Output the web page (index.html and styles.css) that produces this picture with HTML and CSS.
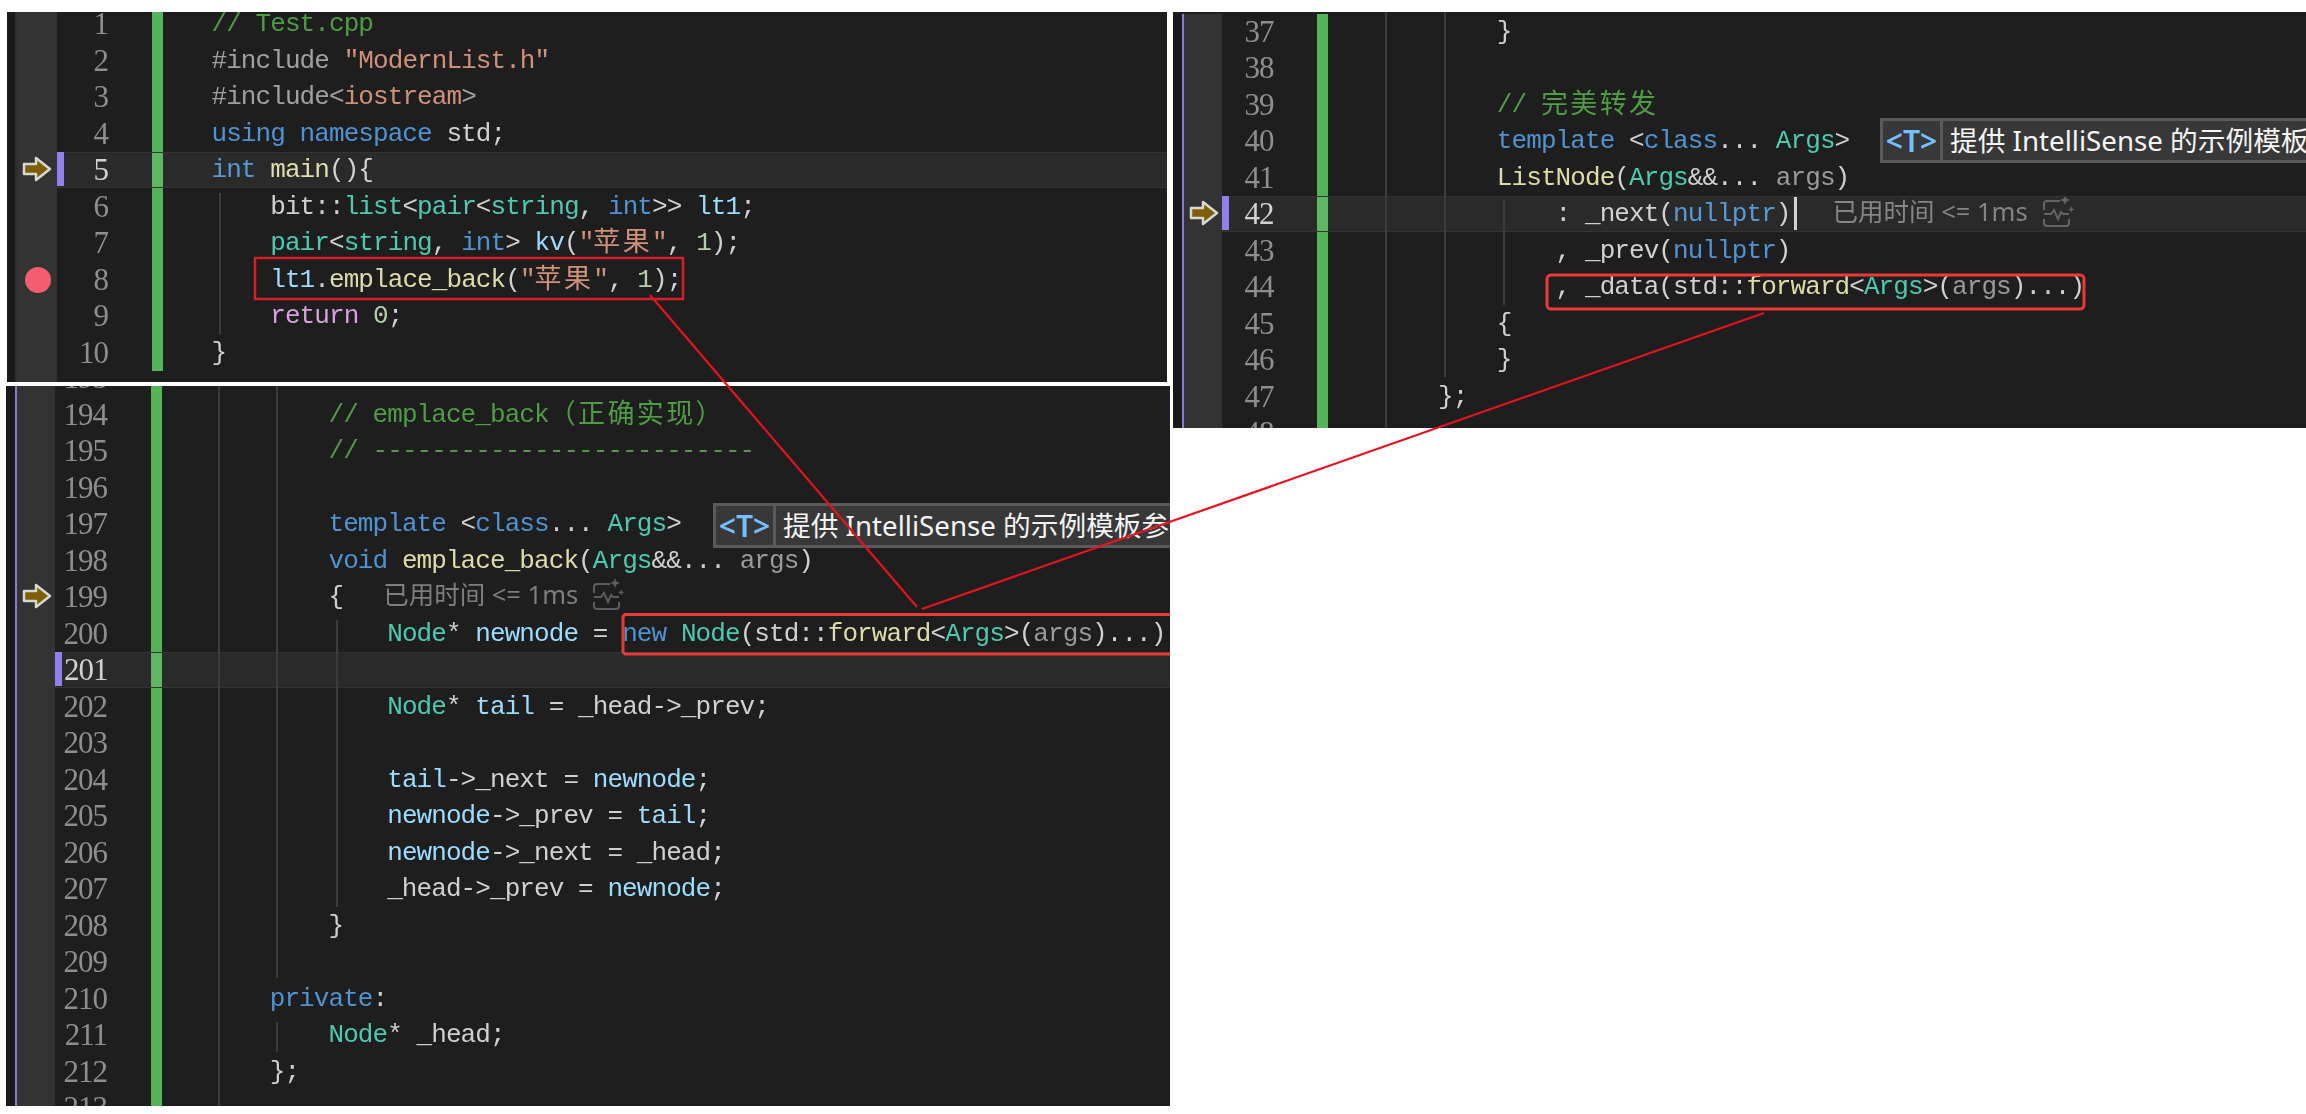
FILE: index.html
```html
<!DOCTYPE html>
<html lang="zh-CN">
<head>
<meta charset="utf-8">
<title>emplace_back</title>
<link rel="stylesheet" href="styles.css">
</head>
<body>
<div class="page">
  <div class="left-col">
    <section class="panel panel-a">
      <div class="row"><i class="g"></i><b class="num">1</b><i class="chg"></i><code class="code"><span class="c">// Test.cpp</span></code></div>
      <div class="row"><i class="g"></i><b class="num">2</b><i class="chg"></i><code class="code"><span class="m">#include</span> <span class="s">"ModernList.h"</span></code></div>
      <div class="row"><i class="g"></i><b class="num">3</b><i class="chg"></i><code class="code"><span class="m">#include&lt;</span><span class="s">iostream</span><span class="m">&gt;</span></code></div>
      <div class="row"><i class="g"></i><b class="num">4</b><i class="chg"></i><code class="code"><span class="k">using namespace</span> std;</code></div>
      <div class="row cur"><i class="g"><svg class="arrow" viewBox="0 0 30 26"><path d="M2 8H14V2L28 13L14 24V18H2Z"/></svg></i><b class="num">5</b><i class="chg"></i><code class="code"><span class="k">int</span> <span class="f">main</span>(){</code></div>
      <div class="row"><i class="g"></i><b class="num">6</b><i class="chg"></i><code class="code">    bit::<span class="t">list</span>&lt;<span class="t">pair</span>&lt;<span class="t">string</span>, <span class="k">int</span>&gt;&gt; <span class="v">lt1</span>;</code></div>
      <div class="row"><i class="g"></i><b class="num">7</b><i class="chg"></i><code class="code">    <span class="t">pair</span>&lt;<span class="t">string</span>, <span class="k">int</span>&gt; <span class="v">kv</span>(<span class="s">"<span class="zh">苹果</span>"</span>, <span class="n">1</span>);</code></div>
      <div class="row"><i class="g"><i class="bp"></i></i><b class="num">8</b><i class="chg"></i><code class="code">    <span class="v">lt1</span>.<span class="f">emplace_back</span>(<span class="s">"<span class="zh">苹果</span>"</span>, <span class="n">1</span>);</code></div>
      <div class="row"><i class="g"></i><b class="num">9</b><i class="chg"></i><code class="code">    <span class="r">return</span> <span class="n">0</span>;</code></div>
      <div class="row"><i class="g"></i><b class="num">10</b><i class="chg"></i><code class="code">}</code></div>
      <div class="row"><i class="g"></i><b class="num"></b><i class="chg off"></i><code class="code"></code></div>
      <i class="guide ga1"></i>
    </section>
    <section class="panel panel-c">
      <div class="row"><i class="g"></i><b class="num">193</b><i class="chg"></i><code class="code">        <span class="c">//</span></code></div>
      <div class="row"><i class="g"></i><b class="num">194</b><i class="chg"></i><code class="code">        <span class="c">// emplace_back<span class="zh">（正确实现）</span></span></code></div>
      <div class="row"><i class="g"></i><b class="num">195</b><i class="chg"></i><code class="code">        <span class="c">// --------------------------</span></code></div>
      <div class="row"><i class="g"></i><b class="num">196</b><i class="chg"></i><code class="code"></code></div>
      <div class="row"><i class="g"></i><b class="num">197</b><i class="chg"></i><code class="code">        <span class="k">template</span> &lt;<span class="k">class</span>... <span class="t">Args</span>&gt;</code></div>
      <div class="row"><i class="g"></i><b class="num">198</b><i class="chg"></i><code class="code">        <span class="k">void</span> <span class="f">emplace_back</span>(<span class="t">Args</span>&amp;&amp;... <span class="p">args</span>)</code></div>
      <div class="row"><i class="g"><svg class="arrow" viewBox="0 0 30 26"><path d="M2 8H14V2L28 13L14 24V18H2Z"/></svg></i><b class="num">199</b><i class="chg"></i><code class="code">        {<span class="lens lens-c">已用时间 &lt;= 1ms<svg class="lens-icon" viewBox="0 0 30 29"><path d="M1 12V6a3 3 0 0 1 3-3H17M1 21v4a3 3 0 0 0 3 3H23a3 3 0 0 0 3-3v-4M1 16H8l3-4 4 9 3-7 2 2H26"/><path class="spark" d="M22-3l1.500 3.500L27 2l-3.500 1.500L22 7l-1.500-3.500L17 2l3.500-1.500ZM28.300 8l.9 2.400 2.400.9-2.400.9-.9 2.400-.9-2.400-2.400-.9 2.400-.9Z"/></svg></span></code></div>
      <div class="row"><i class="g"></i><b class="num">200</b><i class="chg"></i><code class="code">            <span class="t">Node</span>* <span class="v">newnode</span> = <span class="k">new</span> <span class="t">Node</span>(std::<span class="f">forward</span>&lt;<span class="t">Args</span>&gt;(<span class="p">args</span>)...);</code></div>
      <div class="row cur"><i class="g"></i><b class="num">201</b><i class="chg"></i><code class="code"></code></div>
      <div class="row"><i class="g"></i><b class="num">202</b><i class="chg"></i><code class="code">            <span class="t">Node</span>* <span class="v">tail</span> = _head-&gt;_prev;</code></div>
      <div class="row"><i class="g"></i><b class="num">203</b><i class="chg"></i><code class="code"></code></div>
      <div class="row"><i class="g"></i><b class="num">204</b><i class="chg"></i><code class="code">            <span class="v">tail</span>-&gt;_next = <span class="v">newnode</span>;</code></div>
      <div class="row"><i class="g"></i><b class="num">205</b><i class="chg"></i><code class="code">            <span class="v">newnode</span>-&gt;_prev = <span class="v">tail</span>;</code></div>
      <div class="row"><i class="g"></i><b class="num">206</b><i class="chg"></i><code class="code">            <span class="v">newnode</span>-&gt;_next = _head;</code></div>
      <div class="row"><i class="g"></i><b class="num">207</b><i class="chg"></i><code class="code">            _head-&gt;_prev = <span class="v">newnode</span>;</code></div>
      <div class="row"><i class="g"></i><b class="num">208</b><i class="chg"></i><code class="code">        }</code></div>
      <div class="row"><i class="g"></i><b class="num">209</b><i class="chg"></i><code class="code"></code></div>
      <div class="row"><i class="g"></i><b class="num">210</b><i class="chg"></i><code class="code">    <span class="k">private</span>:</code></div>
      <div class="row"><i class="g"></i><b class="num">211</b><i class="chg"></i><code class="code">        <span class="t">Node</span>* _head;</code></div>
      <div class="row"><i class="g"></i><b class="num">212</b><i class="chg"></i><code class="code">    };</code></div>
      <div class="row"><i class="g"></i><b class="num">213</b><i class="chg"></i><code class="code"></code></div>
      <i class="guide gc1"></i><i class="guide gc2"></i><i class="guide gc3"></i><i class="guide gc4"></i>
      <div class="hint"><span class="hint-t">&lt;T&gt;</span><span class="hint-text">提供 IntelliSense 的示例模板参数</span></div>
    </section>
  </div>
  <section class="panel panel-b">
    <div class="row"><i class="g"></i><b class="num">37</b><i class="chg"></i><code class="code">        }</code></div>
    <div class="row"><i class="g"></i><b class="num">38</b><i class="chg"></i><code class="code"></code></div>
    <div class="row"><i class="g"></i><b class="num">39</b><i class="chg"></i><code class="code">        <span class="c">// <span class="zh">完美转发</span></span></code></div>
    <div class="row"><i class="g"></i><b class="num">40</b><i class="chg"></i><code class="code">        <span class="k">template</span> &lt;<span class="k">class</span>... <span class="t">Args</span>&gt;</code></div>
    <div class="row"><i class="g"></i><b class="num">41</b><i class="chg"></i><code class="code">        <span class="f">ListNode</span>(<span class="t">Args</span>&amp;&amp;... <span class="p">args</span>)</code></div>
    <div class="row cur"><i class="g"><svg class="arrow" viewBox="0 0 30 26"><path d="M2 8H14V2L28 13L14 24V18H2Z"/></svg></i><b class="num">42</b><i class="chg"></i><code class="code">            : _next(<span class="k">nullptr</span>)<i class="caret"></i><span class="lens lens-b">已用时间 &lt;= 1ms<svg class="lens-icon" viewBox="0 0 30 29"><path d="M1 12V6a3 3 0 0 1 3-3H17M1 21v4a3 3 0 0 0 3 3H23a3 3 0 0 0 3-3v-4M1 16H8l3-4 4 9 3-7 2 2H26"/><path class="spark" d="M22-3l1.500 3.500L27 2l-3.500 1.500L22 7l-1.500-3.500L17 2l3.500-1.500ZM28.300 8l.9 2.400 2.400.9-2.400.9-.9 2.400-.9-2.400-2.400-.9 2.400-.9Z"/></svg></span></code></div>
    <div class="row"><i class="g"></i><b class="num">43</b><i class="chg"></i><code class="code">            , _prev(<span class="k">nullptr</span>)</code></div>
    <div class="row"><i class="g"></i><b class="num">44</b><i class="chg"></i><code class="code">            , _data(std::<span class="f">forward</span>&lt;<span class="t">Args</span>&gt;(<span class="p">args</span>)...)</code></div>
    <div class="row"><i class="g"></i><b class="num">45</b><i class="chg"></i><code class="code">        {</code></div>
    <div class="row"><i class="g"></i><b class="num">46</b><i class="chg"></i><code class="code">        }</code></div>
    <div class="row"><i class="g"></i><b class="num">47</b><i class="chg"></i><code class="code">    };</code></div>
    <div class="row"><i class="g"></i><b class="num">48</b><i class="chg"></i><code class="code"></code></div>
    <i class="guide gb1"></i><i class="guide gb2"></i><i class="guide gb3"></i>
    <div class="hint"><span class="hint-t">&lt;T&gt;</span><span class="hint-text">提供 IntelliSense 的示例模板参数</span></div>
  </section>
  <svg class="notes" viewBox="0 0 2306 1114">
    <rect class="box-a" x="255" y="258" width="428" height="41"/>
    <path class="box-b" d="M1170 614.500H626a3 3 0 0 0-3 3V651a3 3 0 0 0 3 3H1170"/>
    <rect class="box-b" x="1547" y="275" width="537" height="34" rx="4"/>
    <path class="line" d="M650 295L917 607"/>
    <path class="line" d="M922 609L1764 313"/>
  </svg>
</div>
</body>
</html>
```
FILE: styles.css
```css
* { box-sizing: border-box; }
html, body { margin: 0; padding: 0; background: #fff; overflow: hidden; }
.page { position: relative; width: 2306px; height: 1114px; display: flex; align-items: flex-start; padding-top: 12px; }
.left-col { width: 1173px; flex: none; display: flex; flex-direction: column; gap: 4px; padding-left: 6px; }

.panel { position: relative; overflow: hidden; background: #1e1e1e; --dark: 9px; --line: #3a3a3a; --gray: 38px; --num: 45px; --gap: 43.5px; --pad: 49.5px; }
.panel-a { width: 1160px; height: 370px; margin-left: 1px; --num: 44px; --dark: 8px; --gray: 40px; --line: #2e2e2e; --pad: 49px; }
.panel-a .row:first-child { margin-top: -6px; }
.panel-c { width: 1164px; height: 720px; }
.panel-c .row:first-child { margin-top: -26px; }
.panel-b { width: 1133px; height: 416px; padding-top: 1.5px; --gap: 44px; --num: 44.400px; --pad: 51px; }

.row { position: relative; display: flex; height: 36.5px; }
.g { position: relative; display: block; flex: none; height: 36.5px; width: calc(var(--dark) + 2px + var(--gray) + 7px);
  background: linear-gradient(90deg, #191919 var(--dark), var(--line) var(--dark), var(--line) calc(var(--dark) + 2px), #333 calc(var(--dark) + 2px), #333 calc(var(--dark) + 2px + var(--gray)), #1e1e1e calc(var(--dark) + 2px + var(--gray))); }
.panel-b, .panel-c { --line: #8a7ad8; }

.num { flex: none; width: var(--num); text-align: right; font: 400 31px/36.5px "Liberation Serif", serif; letter-spacing: -1px; color: #8e8e8e; filter: blur(.3px); }
.chg { display: block; flex: none; width: 11px; margin-left: var(--gap); background: #55b35a; }
.chg.off { background: none; }
.code { flex: 1; min-width: 0; padding-left: var(--pad); white-space: pre; font: 400 26px/36.5px "Liberation Mono", "Noto Sans CJK SC", monospace; letter-spacing: -.92px; color: #d0d0d0; filter: blur(.3px); }
.zh { font-family: "Noto Sans CJK SC", sans-serif; font-size: 27px; line-height: 0; letter-spacing: 2.360px; vertical-align: -1px; }

.c { color: #4f9c45; }
.k { color: #4f93d2; }
.t { color: #4ec9b0; }
.s { color: #d0917a; }
.f { color: #dcdcaa; }
.v { color: #9cdcfe; }
.p { color: #9a9a9a; }
.m { color: #a0a0a0; }
.r { color: #d8a0df; }
.n { color: #b5cea8; }

.cur::after { content: ""; position: absolute; left: calc(var(--dark) + 2px + var(--gray)); right: 0; top: 0; height: 33.500px; background: rgba(255,255,255,.055); border-top: 1px solid #333; border-bottom: 1px solid #333; }
.cur::before { content: ""; position: absolute; z-index: 1; left: calc(var(--dark) + 2px + var(--gray)); top: 0; width: 7px; height: 33.500px; background: #8f80ec; }
.cur .num { color: #d0d0d0; }
.panel-c .cur .num { text-align: left; padding-left: 2px; }

.arrow { position: absolute; left: calc(var(--dark) + 7px); top: 4px; width: 30px; height: 26px; overflow: visible; }
.arrow path { fill: #7f5e08; stroke: #d8d8d0; stroke-width: 2.500; stroke-linejoin: round; }
.bp { position: absolute; left: calc(var(--dark) + 10px); top: 5px; width: 26px; height: 26px; border-radius: 50%; background: #f35e70; }

.guide { position: absolute; width: 2px; background: #3c3c3c; }
.ga1 { left: 212px; top: 181px; height: 141px; }
.gc1 { left: 211.500px; top: 0; bottom: 0; }
.gc2 { left: 270px; top: 0; height: 592px; }
.gc3 { left: 270px; top: 636px; height: 30px; }
.gc4 { left: 330px; top: 234px; height: 287px; }
.gb1 { left: 212px; top: 0; bottom: 0; }
.gb2 { left: 270.500px; top: 0; height: 365px; }
.gb3 { left: 330px; top: 188px; height: 105px; }

.caret { display: inline-block; width: 3px; height: 33px; margin-left: 3px; margin-right: -3px; vertical-align: -9px; background: #d0d0d0; }
.lens { font-family: "Noto Sans", "Noto Sans CJK SC", sans-serif; font-size: 25.500px; line-height: 0; letter-spacing: 0; color: #7e7e7e; }
.lens-b { margin-left: 39px; }
.lens-c { margin-left: 40px; }
.lens-icon { width: 30px; height: 29px; margin-left: 15px; vertical-align: -6px; overflow: visible; }
.lens-icon path { fill: none; stroke: #5c5c5c; stroke-width: 2; }
.lens-icon .spark { fill: #5c5c5c; stroke: none; }

.hint { position: absolute; left: 707px; top: 106px; display: flex; height: 45px; background: #383838; border: 3px solid #5a5a5a; white-space: nowrap; }
.panel-c .hint { top: 117px; }
.hint-t { display: flex; align-items: center; justify-content: center; width: 60px; border-right: 3px solid #5a5a5a; font: 600 30px/1 "Noto Sans", sans-serif; color: #75beff; }
.hint-text { padding: 0 12px 0 7px; font: 400 27.700px/38px "Noto Sans", "Noto Sans CJK SC", sans-serif; color: #f4f4f4; }

.notes { position: absolute; left: 0; top: 0; width: 2306px; height: 1114px; pointer-events: none; }
.notes .line { fill: none; stroke: #e3141f; stroke-width: 2.200; }
.notes .box-a { fill: none; stroke: #d81f28; stroke-width: 2.500; }
.notes .box-b { fill: none; stroke: #e93a38; stroke-width: 3; }
```
